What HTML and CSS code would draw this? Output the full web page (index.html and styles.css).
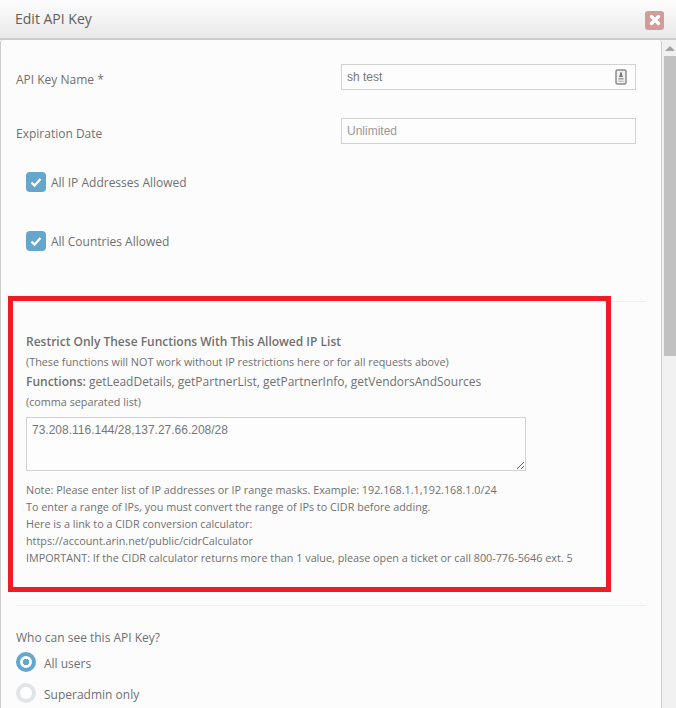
FILE: index.html
```html
<!DOCTYPE html>
<html>
<head>
    <title>Edit API Key</title>
    <meta charset="UTF-8"/>
    <link rel="stylesheet" href="styles.css">
</head>
<body>
<div class="header">
    <h1>Edit API Key</h1>
    <span class="close">
        <svg width="12" height="12" viewBox="0 0 12 12"><path d="M2.500 2.500l7 7M9.500 2.500l-7 7" stroke="#fff" stroke-width="3.400" stroke-linecap="round"/></svg>
    </span>
</div>
<div class="main">
    <div class="content">
        <div class="row first">
            <label>API Key Name *</label>
            <div class="field">
                <input type="text" value="sh test"/>
                <svg class="badge" width="12" height="16" viewBox="0 0 12 16">
                    <rect x="1" y="1" width="10" height="14" rx="1.500" fill="#f1f1f1" stroke="#8a8a8a" stroke-width="1.500"/>
                    <path d="M5 3.500h2v2l1 2.500h-4l1-2.500z" fill="#777"/>
                    <path d="M3.500 9h5v1.500h-5z" fill="#999"/>
                    <path d="M3.500 11.500h5v1.500h-5z" fill="#c4c4c4"/>
                </svg>
            </div>
        </div>
        <div class="row">
            <label>Expiration Date</label>
            <div class="field">
                <input type="text" class="muted" value="Unlimited"/>
            </div>
        </div>
        <div class="check one">
            <span class="box"><svg width="14" height="12" viewBox="0 0 14 12"><path d="M2.500 6.500l3 3 6-6.500" fill="none" stroke="#fff" stroke-width="2.400"/></svg></span>
            <label>All IP Addresses Allowed</label>
        </div>
        <div class="check two">
            <span class="box"><svg width="14" height="12" viewBox="0 0 14 12"><path d="M2.500 6.500l3 3 6-6.500" fill="none" stroke="#fff" stroke-width="2.400"/></svg></span>
            <label>All Countries Allowed</label>
        </div>
        <hr class="line top"/>
        <div class="restrict">
            <div class="red-box"></div>
            <p class="lead"><b>Restrict Only These Functions With This Allowed IP List</b></p>
            <p class="small">(These functions will NOT work without IP restrictions here or for all requests above)</p>
            <p class="lead"><b>Functions:</b> getLeadDetails, getPartnerList, getPartnerInfo, getVendorsAndSources</p>
            <p class="small">(comma separated list)</p>
            <textarea>73.208.116.144/28,137.27.66.208/28</textarea>
            <div class="note">
                Note: Please enter list of IP addresses or IP range masks. Example: 192.168.1.1,192.168.1.0/24<br>
                To enter a range of IPs, you must convert the range of IPs to CIDR before adding.<br>
                Here is a link to a CIDR conversion calculator:<br>
                https://account.arin.net/public/cidrCalculator<br>
                IMPORTANT: If the CIDR calculator returns more than 1 value, please open a ticket or call 800-776-5646 ext. 5
            </div>
        </div>
        <hr class="line"/>
        <div class="who">Who can see this API Key?</div>
        <div class="radio on"><span class="dot"></span><label>All users</label></div>
        <div class="radio off"><span class="dot"></span><label>Superadmin only</label></div>
    </div>
    <div class="scrollbar">
        <span class="arrow"></span>
        <span class="thumb"></span>
    </div>
</div>
</body>
</html>
```

FILE: styles.css
```css
* {
    box-sizing: border-box;
}

html, body {
    margin: 0;
    height: 708px;
    overflow: hidden;
    background: #fcfcfc;
    color: #707070;
    font-family: "Open Sans", sans-serif;
    font-size: 12px;
}

.header {
    height: 40px;
    padding: 0 12px 0 15px;
    display: flex;
    align-items: center;
    justify-content: space-between;
    background: linear-gradient(#fdfdfd, #e9e9e9);
    border-bottom: 2px solid #ccc;
}

h1 {
    margin: 0 0 2px 0;
    font-size: 14px;
    font-weight: 400;
    color: #606060;
}

.close {
    width: 19px;
    height: 19px;
    margin: 2px 0 0 0;
    display: flex;
    align-items: center;
    justify-content: center;
    background: #d39c98;
    border-radius: 3px;
}

.main {
    display: flex;
    height: 668px;
}

.content {
    flex: 1;
    padding: 24px 15px 0 15px;
    background: #fcfcfc;
    border-left: 1px solid #ccc;
    border-right: 1px solid #ccc;
    border-radius: 3px 3px 0 0;
    overflow: hidden;
}

.scrollbar {
    width: 14px;
    background: #f1f1f1;
    padding: 0 0 0 2px;
}

.arrow {
    display: block;
    width: 0;
    margin: 6px 0 0 1px;
    border-left: 5px solid transparent;
    border-right: 5px solid transparent;
    border-bottom: 5px solid #a3a3a3;
}

.thumb {
    display: block;
    height: 300px;
    margin-top: 5px;
    background: #c1c1c1;
}

.row {
    display: flex;
    align-items: center;
    justify-content: space-between;
    margin: 28px 10px 0 0;
}

.row.first {
    margin-top: 0;
}

.row label {
    padding-top: 4px;
}

.field {
    position: relative;
    width: 295px;
}

input[type="text"] {
    display: block;
    width: 100%;
    height: 26px;
    padding: 0 5px;
    border: 1px solid #d2d2d2;
    background: #fdfdfd;
    color: #777;
    font-family: "Liberation Sans", sans-serif;
    font-size: 12px;
    outline: 0;
}

input.muted {
    color: #999;
}

.badge {
    position: absolute;
    top: 5px;
    right: 9px;
}

.check {
    display: flex;
    align-items: center;
    gap: 5px;
    margin-left: 10px;
    height: 20px;
}

.check label {
    padding-top: 1px;
}

.check.one {
    margin-top: 28px;
}

.check.two {
    margin-top: 39px;
}

.box {
    width: 20px;
    height: 20px;
    display: flex;
    align-items: center;
    justify-content: center;
    background: #65a6cc;
    border-radius: 4px;
}

.line {
    height: 1px;
    margin: 0;
    border: 0;
    background: #eee;
}

.line.top {
    margin-top: 50px;
}

.restrict {
    position: relative;
    padding: 30px 0 39px 10px;
}

.red-box {
    position: absolute;
    top: -6px;
    left: -8px;
    width: 603px;
    height: 296px;
    border: 5px solid #ee1c25;
}

p {
    margin: 0;
    height: 20px;
    line-height: 20px;
}

b {
    font-weight: 600;
}

.small {
    font-size: 10.800px;
}

textarea {
    display: block;
    width: 500px;
    height: 54px;
    margin-top: 5px;
    padding: 5px;
    border: 1px solid #d2d2d2;
    background: #fdfdfd;
    color: #777;
    font-family: "Liberation Sans", sans-serif;
    font-size: 12px;
    outline: 0;
}

.note {
    margin-top: 10px;
    font-size: 10.800px;
    line-height: 17px;
}

.who {
    margin-top: 21px;
    height: 20px;
    line-height: 22px;
}

.radio {
    display: flex;
    align-items: center;
    gap: 8px;
    height: 20px;
    margin-top: 5px;
}

.radio label {
    padding-top: 2px;
}

.radio.off {
    margin-top: 11px;
}

.dot {
    width: 20px;
    height: 20px;
    border-radius: 50%;
    background: #fff;
    border: 4px solid #e1e5e7;
}

.radio.on .dot {
    border: 4px solid #65a6cc;
    background: radial-gradient(circle, #65a6cc 0, #65a6cc 3px, #fff 3.500px);
}
```
